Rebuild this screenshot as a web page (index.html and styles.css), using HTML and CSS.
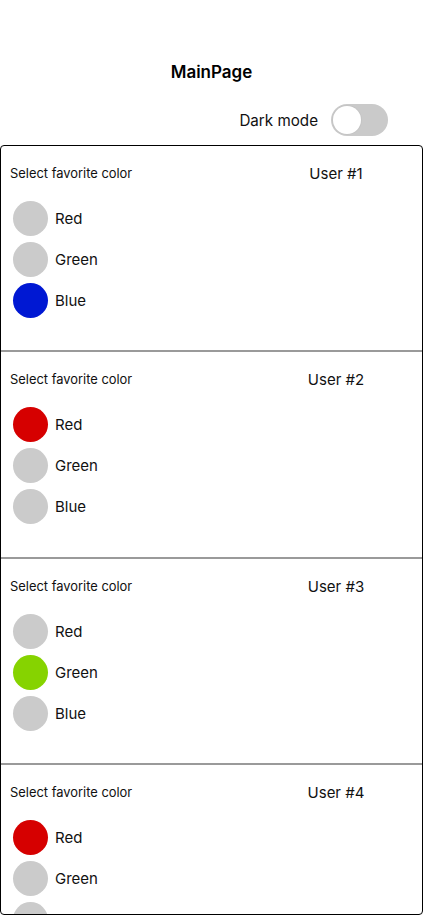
FILE: index.html
```html
<!DOCTYPE html>
<html>
<head>
<meta charset="utf-8">
<link rel="stylesheet" href="styles.css">
</head>
<body>
<div class="page">
  <header class="top">
    <h1 class="title">MainPage</h1>
    <div class="mode-row">
      <span class="mode-label">Dark mode</span>
      <span class="toggle"><span class="knob"></span></span>
    </div>
  </header>
  <main class="list">
    <section class="card">
      <div class="card-head"><span class="prompt">Select favorite color</span><span class="user">User #1</span></div>
      <ul class="options">
        <li class="opt"><span class="dot"></span><span class="name">Red</span></li>
        <li class="opt"><span class="dot"></span><span class="name">Green</span></li>
        <li class="opt"><span class="dot blue"></span><span class="name">Blue</span></li>
      </ul>
    </section>
    <section class="card">
      <div class="card-head"><span class="prompt">Select favorite color</span><span class="user">User #2</span></div>
      <ul class="options">
        <li class="opt"><span class="dot red"></span><span class="name">Red</span></li>
        <li class="opt"><span class="dot"></span><span class="name">Green</span></li>
        <li class="opt"><span class="dot"></span><span class="name">Blue</span></li>
      </ul>
    </section>
    <section class="card">
      <div class="card-head"><span class="prompt">Select favorite color</span><span class="user">User #3</span></div>
      <ul class="options">
        <li class="opt"><span class="dot"></span><span class="name">Red</span></li>
        <li class="opt"><span class="dot green"></span><span class="name">Green</span></li>
        <li class="opt"><span class="dot"></span><span class="name">Blue</span></li>
      </ul>
    </section>
    <section class="card">
      <div class="card-head"><span class="prompt">Select favorite color</span><span class="user">User #4</span></div>
      <ul class="options">
        <li class="opt"><span class="dot red"></span><span class="name">Red</span></li>
        <li class="opt"><span class="dot"></span><span class="name">Green</span></li>
        <li class="opt"><span class="dot"></span><span class="name">Blue</span></li>
      </ul>
    </section>
  </main>
</div>
</body>
</html>
```

FILE: styles.css
```css
* { box-sizing: border-box; }
html, body { margin: 0; padding: 0; background: #fff; }
body {
  font-family: Inter, "Noto Sans", "Liberation Sans", sans-serif;
  color: #111;
  width: 423px;
  height: 915px;
  overflow: hidden;
}
.page { display: flex; flex-direction: column; height: 915px; }
.top { padding-top: 52px; }
.title {
  margin: 0;
  height: 40px;
  line-height: 40px;
  text-align: center;
  font-size: 17px;
  font-weight: 600;
  color: #000;
}
.mode-row {
  margin-top: 12px;
  height: 32px;
  display: flex;
  justify-content: flex-end;
  align-items: center;
  gap: 13px;
  padding-right: 35px;
}
.mode-label { font-size: 15.2px; color: #111; }
.toggle {
  width: 57px;
  height: 32px;
  border-radius: 16px;
  background: #cacaca;
  display: flex;
  align-items: center;
  padding-left: 2px;
}
.knob {
  width: 28px;
  height: 28px;
  border-radius: 50%;
  background: #fff;
  box-shadow: 0 0 0 1px #c4c4c4;
}
.list {
  margin-top: 9px;
  flex: 1;
  border: 1px solid #000;
  border-radius: 4px;
  overflow: hidden;
}
.card {
  height: 206.3px;
  padding-top: 18px;
  border-bottom: 2px solid #9a9a9a;
}
.card-head {
  display: grid;
  grid-template-columns: 1fr 172px;
  height: 20px;
  line-height: 20px;
}
.prompt { padding-left: 9px; font-size: 12.9px; color: #111; }
.user { text-align: center; font-size: 15px; color: #111; }
.options { list-style: none; margin: 14px 0 0; padding: 0; }
.opt {
  height: 41px;
  display: flex;
  align-items: center;
  gap: 7px;
  padding-left: 12px;
}
.dot {
  width: 35px;
  height: 35px;
  border-radius: 50%;
  background: #cbcbcb;
}
.dot.red { background: #d60000; }
.dot.green { background: #86d300; }
.dot.blue { background: #0018d3; }
.name { font-size: 15px; color: #111; }
```
